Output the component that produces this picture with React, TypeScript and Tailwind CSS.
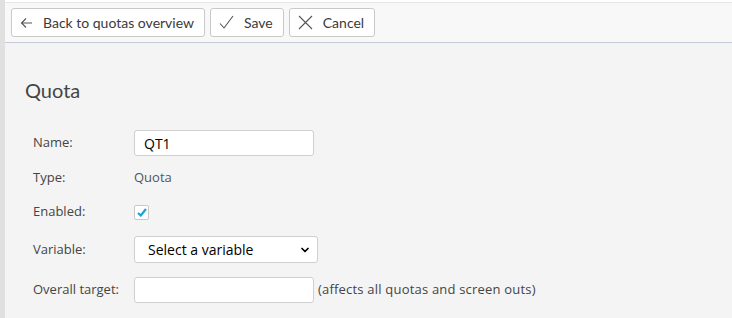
import { ChevronDown } from 'lucide-react';

const font = { fontFamily: 'Lato, "Open Sans", sans-serif' };
const labelFont = { fontFamily: '"Open Sans", Lato, sans-serif' };

function ToolButton({ icon, label }: { icon: React.ReactNode; label: string }) {
  return (
    <button className="h-[29px] flex items-center gap-[10px] pl-[8px] pr-[10px] bg-white border border-[#c9c9c9] rounded-[3px] text-[14px] text-[#3a3a3a]">
      {icon}
      <span>{label}</span>
    </button>
  );
}

const ArrowIcon = (
  <svg width="13" height="12" viewBox="0 0 13 12" fill="none" stroke="#555" strokeWidth="1.1">
    <path d="M12 6H1.5M6 1.5 1.5 6 6 10.5" />
  </svg>
);

const CheckIcon = (
  <svg width="15" height="15" viewBox="0 0 15 15" fill="none" stroke="#555" strokeWidth="1.1">
    <path d="M1 8.5 5 13 14 1" />
  </svg>
);

const CrossIcon = (
  <svg width="15" height="15" viewBox="0 0 15 15" fill="none" stroke="#555" strokeWidth="1.1">
    <path d="M1 1 14 14M14 1 1 14" />
  </svg>
);

export default function App() {
  return (
    <div className="flex w-[732px] h-[318px] bg-[#f4f4f4] overflow-hidden" style={font}>
      <div className="w-[5px] shrink-0 bg-[#e1e0e0]" />
      <div className="flex-1 flex flex-col">
        {/* toolbar */}
        <div className="h-[2px] bg-white" />
        <div className="h-[41px] bg-[#f8f8f8] border-t border-[#e6e6e6] border-b border-b-[#c4cad8] flex items-start gap-[5px] pl-[6px] pt-[5px]">
          <ToolButton icon={ArrowIcon} label="Back to quotas overview" />
          <ToolButton icon={CheckIcon} label="Save" />
          <ToolButton icon={CrossIcon} label="Cancel" />
        </div>

        {/* content */}
        <div className="pl-[20px] pt-[35px]">
          <h1 className="text-[20px] leading-[24px] text-[#444]">Quota</h1>

          <div className="pl-[8px] mt-[28px] text-[13px] text-[#444]" style={labelFont}>
            <div className="flex items-center h-[26px]">
              <div className="w-[101px]">Name:</div>
              <input
                defaultValue="QT1"
                className="w-[180px] h-[26px] bg-white border border-[#cfcfcf] rounded-[3px] pl-[9px] text-[14px] text-black outline-none"
              />
            </div>

            <div className="flex items-center h-[18px] mt-[13px]">
              <div className="w-[101px]">Type:</div>
              <div className="text-[13px] text-[#555]">Quota</div>
            </div>

            <div className="flex items-center h-[18px] mt-[16px]">
              <div className="w-[101px]">Enabled:</div>
              <div className="w-[15px] h-[15px] bg-white border border-[#c9c9c9] rounded-[2px] flex items-center justify-center">
                <svg width="10" height="9" viewBox="0 0 10 9" fill="none" stroke="#1ba3d8" strokeWidth="2.2">
                  <path d="M1 5 3.8 7.5 9 1" />
                </svg>
              </div>
            </div>

            <div className="flex items-center h-[27px] mt-[15px]">
              <div className="w-[101px]">Variable:</div>
              <div className="relative w-[184px] h-[27px]">
                <select className="appearance-none w-full h-full bg-white border border-[#cfcfcf] rounded-[3px] pl-[13px] text-[14px] text-black outline-none">
                  <option>Select a variable</option>
                </select>
                <ChevronDown size={12} strokeWidth={3.5} className="absolute right-[7px] top-[8px] text-black pointer-events-none" />
              </div>
            </div>

            <div className="flex items-center h-[26px] mt-[14px]">
              <div className="w-[101px]">Overall target:</div>
              <input className="w-[180px] h-[26px] bg-white border border-[#cfcfcf] rounded-[3px] pl-[9px] text-[14px] outline-none" />
              <span className="ml-[4px] text-[13px] text-[#444] tracking-[0.2px]">(affects all quotas and screen outs)</span>
            </div>
          </div>
        </div>
      </div>
    </div>
  );
}
